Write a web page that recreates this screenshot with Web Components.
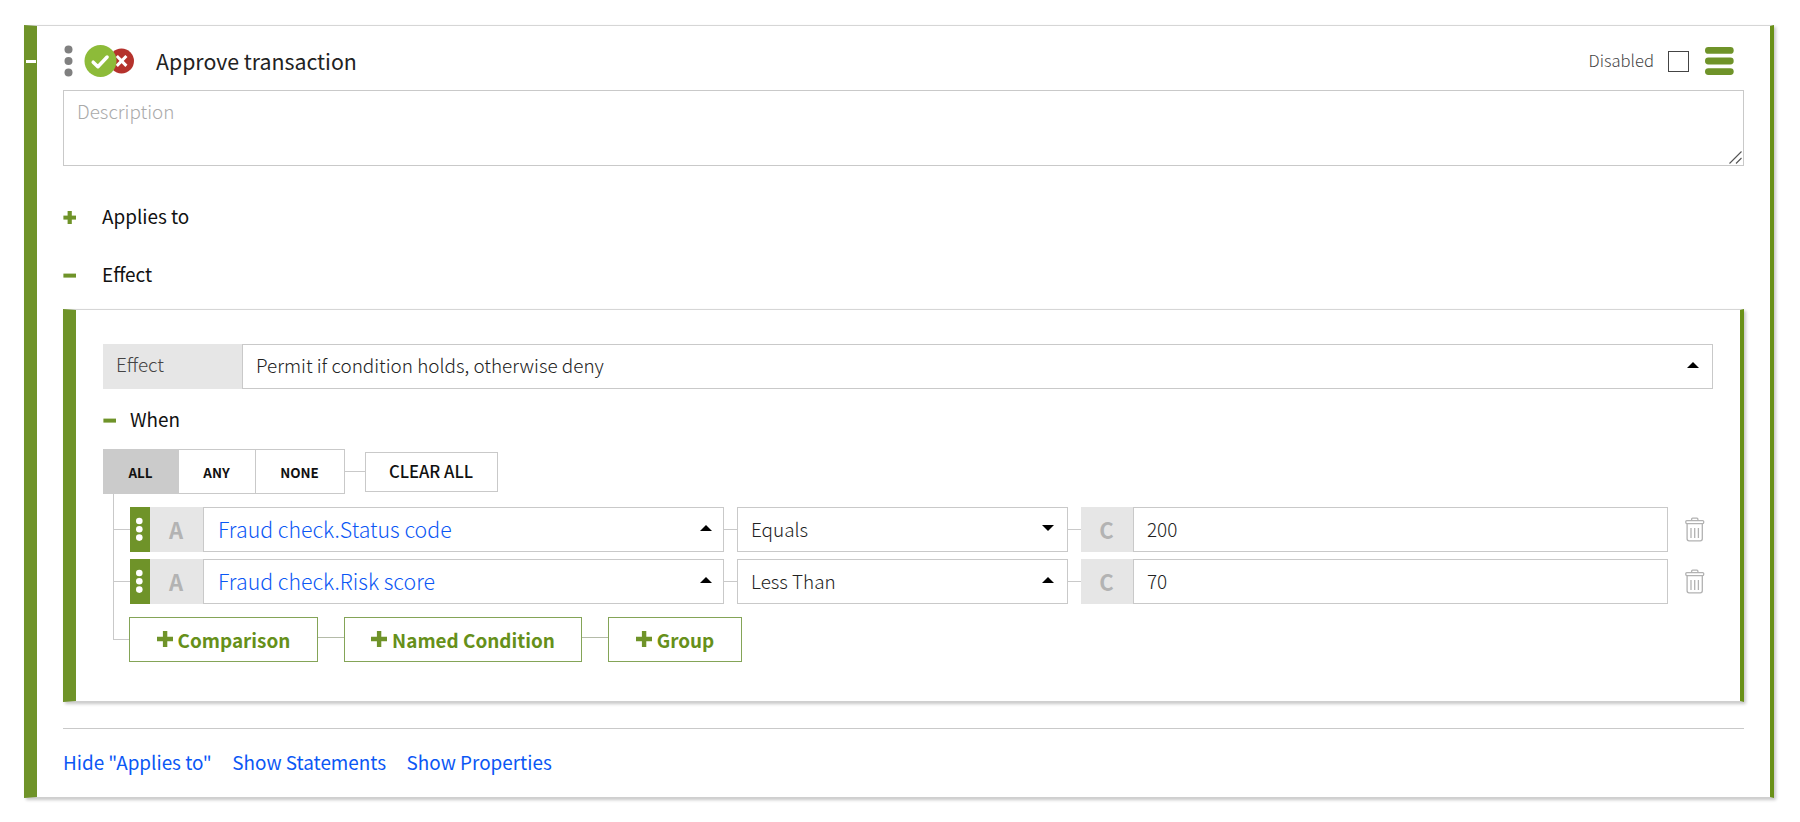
<!DOCTYPE html>
<html lang="en">
<head>
<meta charset="utf-8">
<title>Approve transaction</title>
<style>
  body {
    margin: 0;
    padding: 25px 26px 24px 24px;
    background: #fff;
    color: #1a1a1a;
    font-family: "Noto Sans CJK SC", "Noto Sans CJK JP", sans-serif;
    font-size: 18.9px;
    line-height: 26px;
    --green: #6f9329;
    --line: #c9c9c9;
    --blue: #0b57f5;
  }
</style>
</head>
<body>
<rule-card></rule-card>

<script>
class GreenPanel extends HTMLElement {
    constructor() {
        super();
        this.shadowDOM = this.attachShadow({mode: 'open'});
    }

    connectedCallback() {
        this.shadowDOM.innerHTML = `
        <style>
        :host {
            display: block;
            box-sizing: border-box;
            background: #fff;
            border: 1px solid #cfcfcf;
            border-left: 13px solid var(--green);
            border-right: 4px solid #6a9118;
            border-top-color: #d6d6d6;
            box-shadow: 2px 2px 3px rgba(0, 0, 0, .22);
        }
        </style>
        <slot></slot>
      `;
    }
}
customElements.define('green-panel', GreenPanel);

class SectionToggle extends HTMLElement {
    constructor() {
        super();
        this.shadowDOM = this.attachShadow({mode: 'open'});
    }

    connectedCallback() {
        const open = this.hasAttribute('open');
        this.shadowDOM.innerHTML = `
        <style>
        :host {
            display: flex;
            align-items: center;
            gap: var(--gap, 26px);
            height: 26px;
            color: #111;
        }
        svg {
            flex: none;
            display: block;
        }
        span { margin-bottom: 2px; }
        </style>
        <svg width="13" height="13" viewBox="0 0 13 13" fill="#6f9329">
            <rect x="0.4" y="4.6" width="12.6" height="4"/>
            ${open ? '' : '<rect x="4.6" y="0" width="4.2" height="13"/>'}
        </svg>
        <span><slot></slot></span>
      `;
    }
}
customElements.define('section-toggle', SectionToggle);

class SelectBox extends HTMLElement {
    constructor() {
        super();
        this.shadowDOM = this.attachShadow({mode: 'open'});
    }

    connectedCallback() {
        const arrow = this.getAttribute('arrow');
        const shape = arrow === 'down' ? 'M0 0h12L6 6z' : 'M0 6h12L6 0z';
        this.shadowDOM.innerHTML = `
        <style>
        :host {
            display: flex;
            align-items: center;
            justify-content: space-between;
            box-sizing: border-box;
            height: 45px;
            padding: 0 13px;
            border: 1px solid var(--line);
            background: #fff;
            color: #222;
            font-weight: 300;
        }
        :host([link]) {
            color: var(--blue);
            font-size: 21.3px;
            padding-left: 14px;
            padding-right: 11px;
        }
        span { margin-bottom: var(--lift, 3px); }
        svg {
            display: block;
            margin-bottom: 4px;
        }
        </style>
        <span><slot></slot></span>
        ${arrow ? `<svg width="12" height="6" viewBox="0 0 12 6"><path d="${shape}" fill="#000"/></svg>` : ''}
      `;
    }
}
customElements.define('select-box', SelectBox);

class MatchMode extends HTMLElement {
    constructor() {
        super();
        this.shadowDOM = this.attachShadow({mode: 'open'});
    }

    connectedCallback() {
        this.shadowDOM.innerHTML = `
        <style>
        :host {
            display: flex;
            align-items: center;
            color: #111;
        }
        div {
            box-sizing: border-box;
            display: flex;
            align-items: center;
            justify-content: center;
            height: 45px;
            padding: 0 1px 0 0;
            border: 1px solid var(--line);
            font-size: 13.4px;
            font-weight: 700;
        }
        .all { width: 76px; background: #cbcbcb; border-color: #cbcbcb; }
        .any { width: 77px; border-left: 0; }
        .none { width: 89px; border-left: 0; }
        i { width: 20px; height: 1px; background: var(--line); }
        .clear {
            width: 133px;
            height: 40px;
            padding-bottom: 2px;
            font-size: 16.7px;
            font-weight: 500;
        }
        </style>
        <div class="all">ALL</div>
        <div class="any">ANY</div>
        <div class="none">NONE</div>
        <i></i>
        <div class="clear">CLEAR ALL</div>
      `;
    }
}
customElements.define('match-mode', MatchMode);

class ConditionRow extends HTMLElement {
    constructor() {
        super();
        this.shadowDOM = this.attachShadow({mode: 'open'});
    }

    connectedCallback() {
        this.shadowDOM.innerHTML = `
        <style>
        :host {
            display: flex;
            align-items: center;
            height: 45px;
            --lift: 1px;
        }
        .handle {
            width: 20px;
            height: 45px;
            background: var(--green);
        }
        .handle svg { display: block; }
        .kind {
            display: flex;
            align-items: center;
            justify-content: center;
            box-sizing: border-box;
            width: 53px;
            height: 45px;
            padding: 0 1px 2px 0;
            background: #e6e6e6;
            color: #b3b3b3;
            font-size: 22px;
            font-weight: 700;
        }
        .kind.c { width: 52px; }
        i { height: 1px; background: var(--line); }
        .branch { width: 16px; }
        .trash { display: block; margin-left: 17px; }
        </style>
        <i class="branch"></i>
        <div class="handle">
            <svg width="20" height="45" viewBox="0 0 20 45" fill="#fff">
                <circle cx="9.3" cy="14" r="3.3"/>
                <circle cx="9.3" cy="22.3" r="3.3"/>
                <circle cx="9.3" cy="30.6" r="3.3"/>
            </svg>
        </div>
        <div class="kind">A</div>
        <select-box link arrow="up" style="width:521px">${this.getAttribute('attr')}</select-box>
        <i style="width:13px"></i>
        <select-box arrow="${this.getAttribute('arrow')}" style="width:331px">${this.getAttribute('op')}</select-box>
        <i style="width:13px"></i>
        <div class="kind c">C</div>
        <select-box style="width:535px">${this.getAttribute('value')}</select-box>
        <svg class="trash" width="20" height="25" viewBox="0 0 20 25" fill="none" stroke="#b2b2b2" stroke-width="1.3">
            <path d="M6.6 3.4V2.2q0-1 1-1h4.3q1 0 1 1v1.2"/>
            <rect x=".8" y="3.6" width="17.9" height="3" rx="1"/>
            <path d="M2.1 6.6V21.8q0 2 2 2h11.2q2 0 2-2V6.6"/>
            <path d="M6 11v10M9.7 11v10M13.4 11v10"/>
        </svg>
      `;
    }
}
customElements.define('condition-row', ConditionRow);

class AddButton extends HTMLElement {
    constructor() {
        super();
        this.shadowDOM = this.attachShadow({mode: 'open'});
    }

    connectedCallback() {
        this.shadowDOM.innerHTML = `
        <style>
        :host {
            display: flex;
            align-items: center;
            justify-content: center;
            gap: 5px;
            box-sizing: border-box;
            height: 45px;
            border: 1px solid #84a457;
            color: #66901a;
            font-weight: 700;
        }
        svg { display: block; margin-bottom: 1px; }
        </style>
        <svg width="16" height="16" viewBox="0 0 16 16" fill="#6f9329">
            <path d="M5.9 0h4.4v5.8H16v4.4h-5.7V16H5.9v-5.8H0V5.8h5.9z"/>
        </svg>
        <span><slot></slot></span>
      `;
    }
}
customElements.define('add-button', AddButton);

class ConditionTree extends HTMLElement {
    constructor() {
        super();
        this.shadowDOM = this.attachShadow({mode: 'open'});
    }

    connectedCallback() {
        this.shadowDOM.innerHTML = `
        <style>
        :host { display: flex; padding-left: 10px; }
        .trunk {
            width: 1px;
            height: 146px;
            background: var(--line);
        }
        .rows { padding-top: 13px; }
        condition-row + condition-row { margin-top: 7px; }
        .adds {
            display: flex;
            align-items: center;
            margin-top: 13px;
        }
        i { height: 1px; background: #b4bba8; margin-bottom: 4px; }
        .branch { width: 15px; background: var(--line); margin: 0; }
        </style>
        <div class="trunk"></div>
        <div class="rows">
            <condition-row attr="Fraud check.Status code" op="Equals" arrow="down" value="200"></condition-row>
            <condition-row attr="Fraud check.Risk score" op="Less Than" arrow="up" value="70"></condition-row>
            <div class="adds">
                <i class="branch"></i>
                <add-button style="width:189px">Comparison</add-button>
                <i style="width:26px"></i>
                <add-button style="width:238px">Named Condition</add-button>
                <i style="width:26px"></i>
                <add-button style="width:134px">Group</add-button>
            </div>
        </div>
      `;
    }
}
customElements.define('condition-tree', ConditionTree);

class RuleHeader extends HTMLElement {
    constructor() {
        super();
        this.shadowDOM = this.attachShadow({mode: 'open'});
    }

    connectedCallback() {
        this.shadowDOM.innerHTML = `
        <style>
        :host {
            display: flex;
            align-items: center;
            height: 34px;
        }
        svg { display: block; flex: none; }
        .title {
            flex: 1;
            margin: 0 0 1px 22px;
            font-size: 21.3px;
            color: #222;
        }
        .disabled {
            margin-bottom: 2px;
            color: #444;
            font-size: 16.6px;
            font-weight: 300;
        }
        .check {
            box-sizing: border-box;
            width: 21px;
            height: 21px;
            margin: 0 16px 0 14px;
            border: 1px solid #444;
        }
        </style>
        <svg width="71" height="34" viewBox="0 0 71 34">
            <g fill="#808080">
                <circle cx="5.5" cy="5.5" r="4"/>
                <circle cx="5.5" cy="17" r="4"/>
                <circle cx="5.5" cy="28.5" r="4"/>
            </g>
            <circle cx="58.5" cy="17" r="12.5" fill="#b5322c"/>
            <path d="M53.8 12l9.6 9.9M63.4 12l-9.6 9.9" stroke="#fff" stroke-width="3"/>
            <circle cx="37.5" cy="17" r="16" fill="#8dbb39"/>
            <path d="M30.2 18.2l4.7 4.5 9.2-9.7" fill="none" stroke="#fff" stroke-width="3.5" stroke-linecap="round" stroke-linejoin="round"/>
        </svg>
        <div class="title">Approve transaction</div>
        <div class="disabled">Disabled</div>
        <div class="check"></div>
        <svg width="29" height="28" viewBox="0 0 29 28" fill="#6f9329">
            <rect width="28.7" height="6.8" rx="3.4"/>
            <rect y="10.6" width="28.7" height="6.8" rx="3.4"/>
            <rect y="21.2" width="28.7" height="6.8" rx="3.4"/>
        </svg>
      `;
    }
}
customElements.define('rule-header', RuleHeader);

class RuleCard extends HTMLElement {
    constructor() {
        super();
        this.shadowDOM = this.attachShadow({mode: 'open'});
    }

    connectedCallback() {
        this.shadowDOM.innerHTML = `
        <style>
        :host { display: block; position: relative; }
        .outer {
            height: 773px;
            padding: 18px 26px 0;
        }
        .collapse {
            position: absolute;
            left: 2px;
            top: 35px;
            width: 10px;
            height: 3px;
            background: #fff;
        }
        rule-header { padding-right: 10px; }
        .description {
            position: relative;
            box-sizing: border-box;
            height: 76px;
            margin-top: 12px;
            padding: 7px 13px;
            border: 1px solid var(--line);
            color: #aaa;
            font-weight: 300;
        }
        .grip {
            position: absolute;
            right: 1px;
            bottom: 1px;
        }
        .applies { margin-top: 38px; }
        .effect { margin: 32px 0 21px; }
        .inner {
            height: 393px;
            padding: 34px 27px 0;
        }
        .field { display: flex; }
        .field label {
            box-sizing: border-box;
            width: 139px;
            height: 45px;
            padding: 7px 13px;
            background: #e6e6e6;
            color: #444;
            font-weight: 300;
        }
        .field select-box { flex: 1; }
        .when { --gap: 14px; margin: 18px 0 16px; }
        hr {
            margin: 26px 0 0;
            border: 0;
            border-top: 1px solid var(--line);
        }
        .links {
            display: flex;
            gap: 20.5px;
            margin-top: 20px;
            color: var(--blue);
        }
        </style>
        <green-panel class="outer">
            <rule-header></rule-header>
            <div class="description">Description
                <svg class="grip" width="13" height="13" viewBox="0 0 13 13" stroke="#555" stroke-width="1.1"><path d="M.5 12.5l12-12M7 12.5l5.5-5.5"/></svg>
            </div>
            <section-toggle class="applies">Applies to</section-toggle>
            <section-toggle class="effect" open>Effect</section-toggle>
            <green-panel class="inner">
                <div class="field">
                    <label>Effect</label>
                    <select-box arrow="up">Permit if condition holds, otherwise deny</select-box>
                </div>
                <section-toggle class="when" open>When</section-toggle>
                <match-mode></match-mode>
                <condition-tree></condition-tree>
            </green-panel>
            <hr>
            <div class="links">
                <span>Hide "Applies to"</span>
                <span>Show Statements</span>
                <span>Show Properties</span>
            </div>
        </green-panel>
        <div class="collapse"></div>
      `;
    }
}
customElements.define('rule-card', RuleCard);
</script>
</body>
</html>
